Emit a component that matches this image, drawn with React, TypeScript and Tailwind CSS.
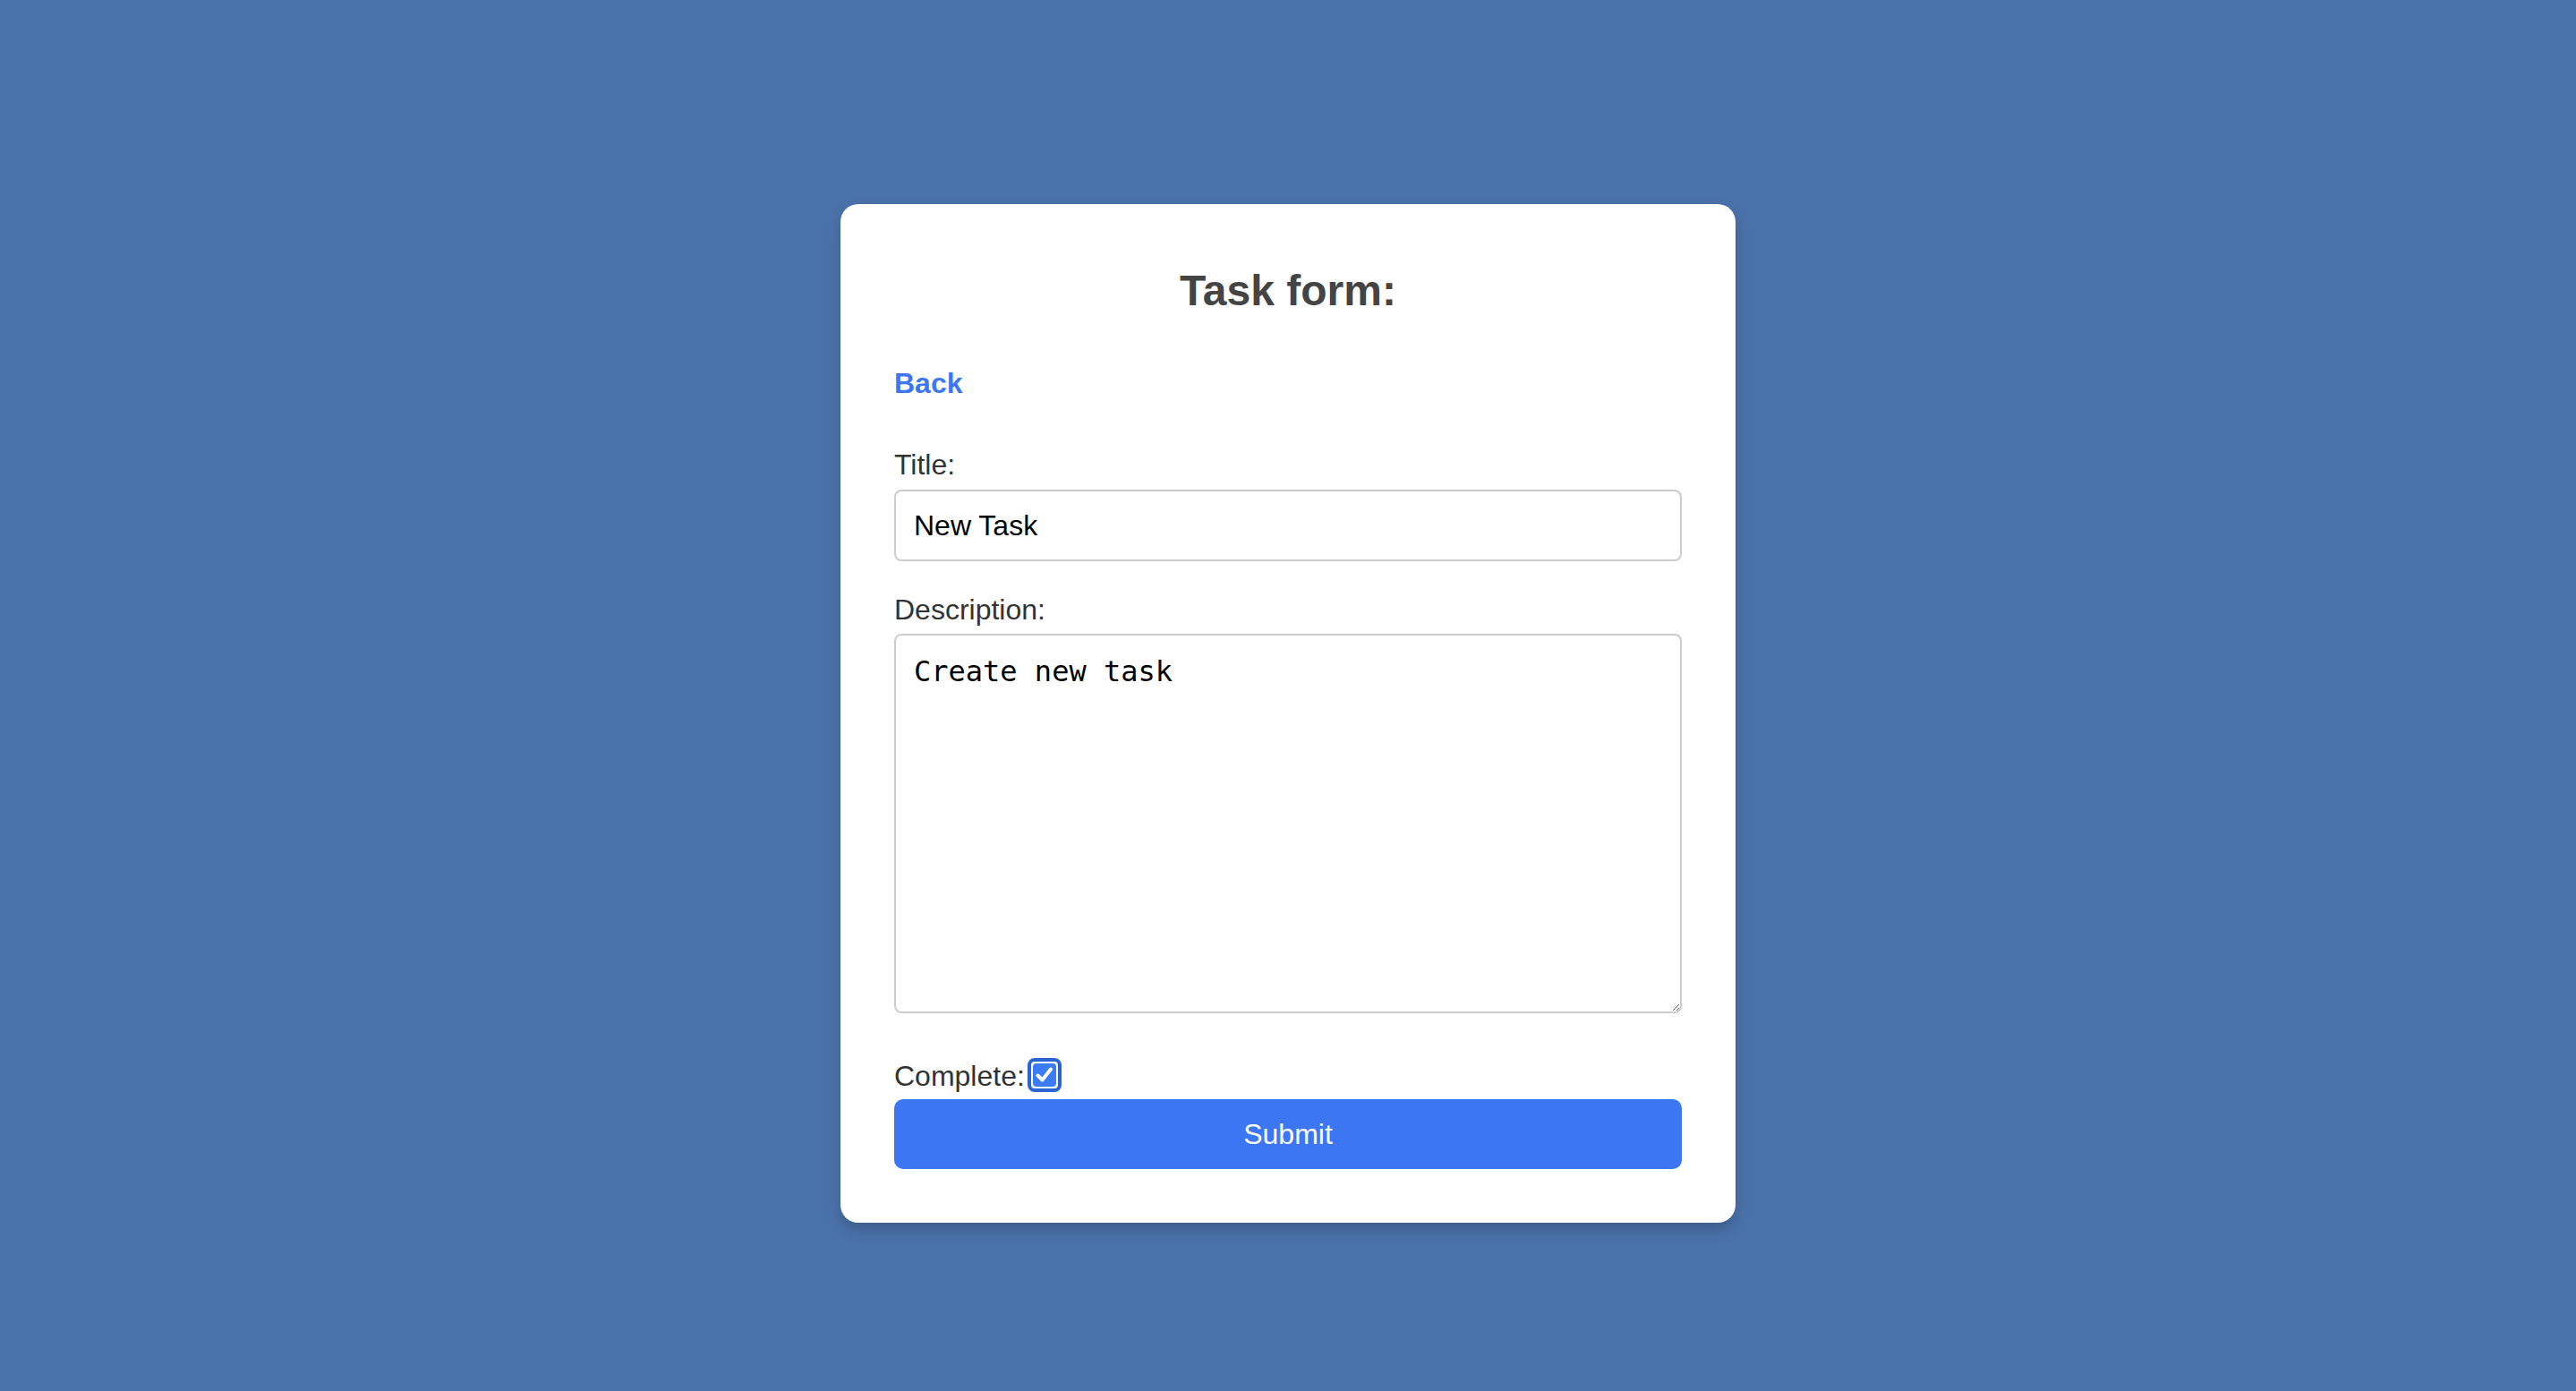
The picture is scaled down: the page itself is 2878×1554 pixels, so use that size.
import React from 'react';

const App: React.FC = () => {
  return (
    <div className="min-h-screen w-full bg-[#4a72aa] flex justify-center pt-[228px] font-['Liberation_Sans',Arial,sans-serif]">
      <form
        className="w-[1000px] h-[1138px] bg-white rounded-[20px] shadow-[0_8px_16px_rgba(0,0,0,0.18)] px-[60px] pt-[69px] flex flex-col"
        onSubmit={(e) => e.preventDefault()}
      >
        <h2 className="text-[48px] leading-[56px] font-bold text-[#444] text-center">Task form:</h2>

        <a href="#" className="mt-[57px] text-[32px] leading-[36px] font-bold text-[#3d76f2] self-start">
          Back
        </a>

        <label className="mt-[55px] text-[32px] leading-[36px] text-[#333]">Title:</label>
        <input
          type="text"
          defaultValue="New Task"
          className="mt-[10px] h-[80px] w-full border-2 border-[#ccc] rounded-[8px] px-[20px] text-[32px] text-black outline-none font-['Liberation_Sans',Arial,sans-serif]"
        />

        <label className="mt-[36px] text-[32px] leading-[36px] text-[#333]">Description:</label>
        <textarea
          defaultValue="Create new task"
          className="mt-[9px] h-[424px] w-full border-2 border-[#ccc] rounded-[8px] px-[20px] pt-[20px] text-[32px] leading-[40px] text-black outline-none resize font-['DejaVu_Sans_Mono',monospace]"
        />

        <div className="mt-[50px] h-[38px] flex items-center">
          <span className="text-[32px] leading-[36px] text-[#333] translate-y-[1px]">Complete:</span>
          <span className="ml-[3px] w-[38px] h-[38px] rounded-[8px] border-[4px] border-[#2a63d4] p-[2px] flex">
            <span className="flex-1 rounded-[4px] bg-[#3b7cf4] flex items-center justify-center">
              <svg width="22" height="20" viewBox="0 0 22 20" fill="none">
                <path d="M3.5 10.5 L8.5 15.5 L18 3.5" stroke="white" strokeWidth="4" strokeLinecap="round" strokeLinejoin="round" />
              </svg>
            </span>
          </span>
        </div>

        <button
          type="submit"
          className="mt-[8px] h-[78px] w-full rounded-[10px] bg-[#3d76f2] text-white text-[32px] font-['Liberation_Sans',Arial,sans-serif]"
        >
          Submit
        </button>
      </form>
    </div>
  );
};

export default App;
